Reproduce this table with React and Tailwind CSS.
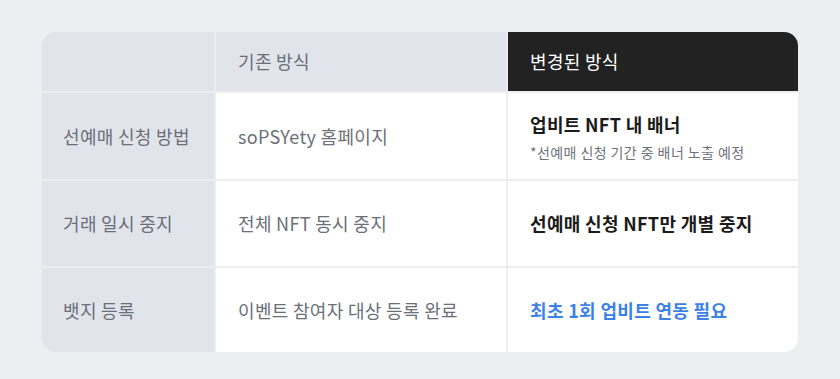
export default function App() {
  const rows = [
    {
      label: '선예매 신청 방법',
      before: 'soPSYety 홈페이지',
      after: (
        <div className="flex flex-col gap-[9px]">
          <span className="text-[18px] font-bold text-[#1b1b1b] leading-[22px]">업비트 NFT 내 배너</span>
          <span className="text-[14px] text-[#6e727a] leading-[16px] tracking-[0.03em]">*선예매 신청 기간 중 배너 노출 예정</span>
        </div>
      ),
      h: 'h-[86px]',
    },
    {
      label: '거래 일시 중지',
      before: '전체 NFT 동시 중지',
      after: <span className="text-[18px] font-bold text-[#1b1b1b]">선예매 신청 NFT만 개별 중지</span>,
      h: 'h-[85px]',
    },
    {
      label: '뱃지 등록',
      before: '이벤트 참여자 대상 등록 완료',
      after: <span className="text-[18px] font-bold text-[#3c82e6]">최초 1회 업비트 연동 필요</span>,
      h: 'h-[84px]',
    },
  ]

  return (
    <div
      className="w-[840px] h-[379px] bg-[#eceef2] pt-[32px] pl-[42px]"
      style={{ fontFamily: '"Noto Sans CJK KR", "Noto Sans", sans-serif' }}
    >
      <div className="w-[756px] grid grid-cols-[172px_290px_290px] gap-[2px] rounded-[14px] overflow-hidden bg-[#eceef2] tracking-[0.02em]">
        {/* 헤더 */}
        <div className="h-[59px] bg-[#e1e4eb]" />
        <div className="h-[59px] bg-[#e1e4eb] flex items-center pl-[22px] text-[18px] text-[#6b6f77]">기존 방식</div>
        <div className="h-[59px] bg-[#222222] flex items-center pl-[22px] text-[18px] text-white">변경된 방식</div>

        {rows.map((r) => (
          <>
            <div key={r.label + 'a'} className={`${r.h} bg-[#e1e4eb] flex items-center pl-[21px] text-[18px] text-[#6b6f77]`}>
              {r.label}
            </div>
            <div key={r.label + 'b'} className={`${r.h} bg-white flex items-center pl-[22px] text-[18px] text-[#6b6f77]`}>
              {r.before}
            </div>
            <div key={r.label + 'c'} className={`${r.h} bg-white flex items-center pl-[22px]`}>
              {r.after}
            </div>
          </>
        ))}
      </div>
    </div>
  )
}
